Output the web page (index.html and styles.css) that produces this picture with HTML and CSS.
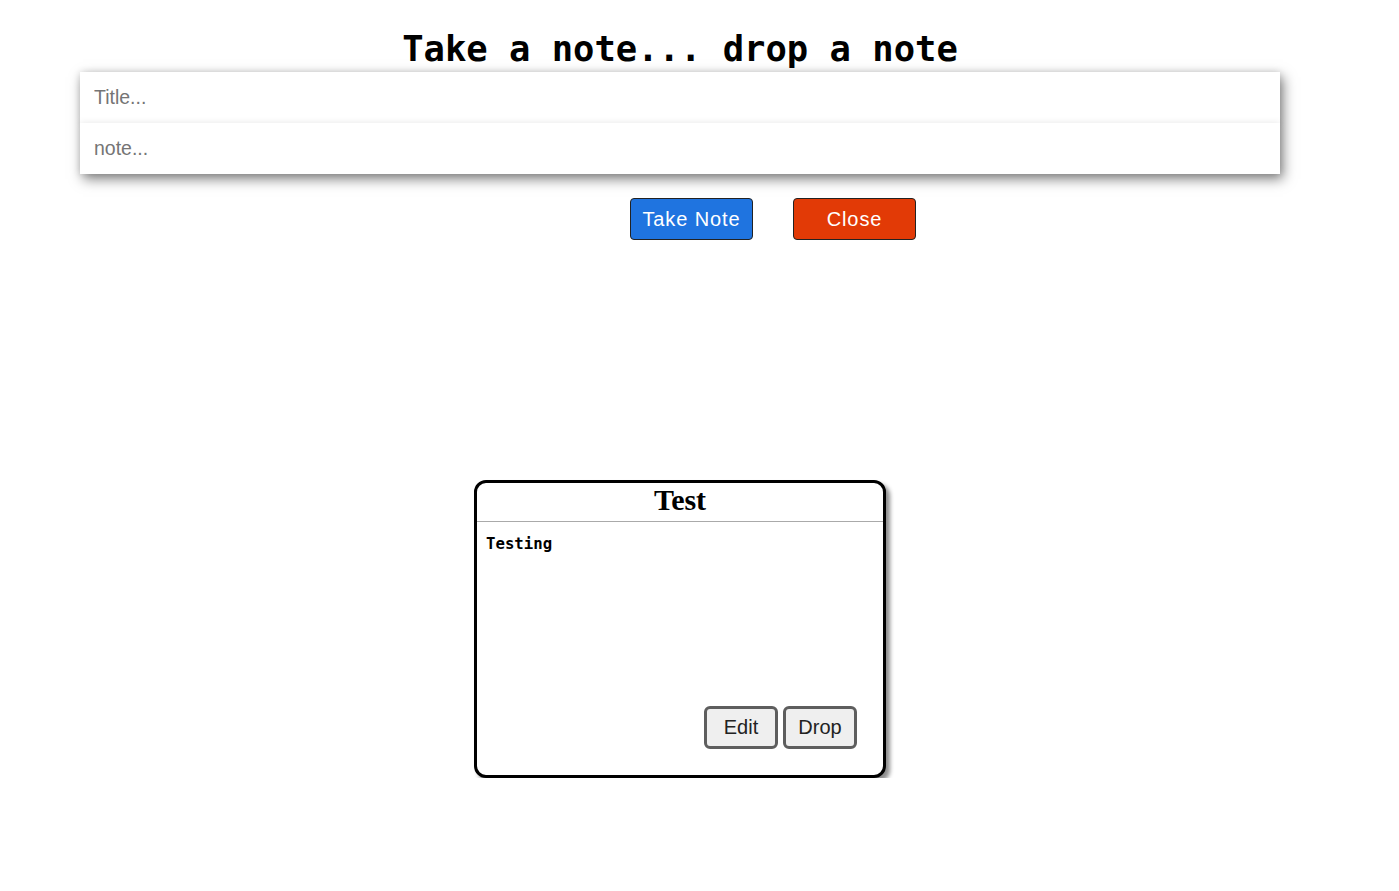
FILE: index.html
```html
<!DOCTYPE html>
<html>
<head>
<meta charset="utf-8">
<link rel="stylesheet" href="styles.css">
</head>
<body>
<div class="app">
  <h1 class="heading">Take a note... drop a note</h1>
  <form class="note-form">
    <input class="field" type="text" placeholder="Title...">
    <input class="field" type="text" placeholder="note...">
  </form>
  <div class="actions">
    <button class="btn btn-take" type="button">Take Note</button>
    <button class="btn btn-close" type="button">Close</button>
  </div>
  <div class="notes">
    <div class="card">
      <div class="card-title">Test</div>
      <div class="card-body">Testing</div>
      <div class="card-actions">
        <button class="card-btn" type="button">Edit</button>
        <button class="card-btn" type="button">Drop</button>
      </div>
    </div>
  </div>
</div>
</body>
</html>
```

FILE: styles.css
```css
html, body {
  margin: 0;
  padding: 0;
  background: #fff;
}
.app {
  width: 1360px;
  padding-top: 26px;
}
.heading {
  margin: 0;
  text-align: center;
  font-family: "DejaVu Sans Mono", "Liberation Mono", monospace;
  font-weight: bold;
  font-size: 35.5px;
  line-height: 46px;
  color: #000;
}
.note-form {
  margin: 0 80px;
  display: flex;
  flex-direction: column;
  box-shadow: 3px 5px 12px rgba(0, 0, 0, 0.5);
}
.field {
  height: 51px;
  box-sizing: border-box;
  border: none;
  outline: none;
  padding: 0 14px;
  font-family: "Liberation Sans", Arial, sans-serif;
  font-size: 19.5px;
  background: #fff;
  box-shadow: 0 0 7px rgba(0, 0, 0, 0.1);
}
.field::placeholder {
  color: #757575;
}
.actions {
  display: flex;
  gap: 40px;
  padding-left: 630px;
  margin-top: 24px;
}
.btn {
  width: 123px;
  height: 42px;
  border: 1px solid #222;
  border-radius: 4px;
  color: #fff;
  font-family: "Liberation Sans", Arial, sans-serif;
  font-size: 20px;
  letter-spacing: 0.9px;
  padding: 0;
}
.btn-take {
  background: #1f74e0;
}
.btn-close {
  background: #e23a06;
}
.notes {
  display: flex;
  justify-content: center;
  margin-top: 240px;
}
.card {
  width: 412px;
  height: 298px;
  box-sizing: border-box;
  border: 3px solid #000;
  border-radius: 12px;
  box-shadow: 4px 4px 4px rgba(0, 0, 0, 0.45);
  display: flex;
  flex-direction: column;
  background: #fff;
}
.card-title {
  height: 39px;
  box-sizing: border-box;
  border-bottom: 1px solid #aaa;
  text-align: center;
  font-family: "Liberation Serif", "DejaVu Serif", serif;
  font-weight: bold;
  font-size: 30px;
  line-height: 34px;
  color: #000;
}
.card-body {
  flex: 1;
  padding: 12px 9px;
  font-family: "DejaVu Sans Mono", "Liberation Mono", monospace;
  font-weight: bold;
  font-size: 15.7px;
  line-height: 20px;
  color: #000;
}
.card-actions {
  display: flex;
  justify-content: flex-end;
  gap: 5px;
  padding: 0 26px 26px 0;
}
.card-btn {
  width: 74px;
  height: 43px;
  padding: 0;
  background: #efefef;
  border: 3px solid #5e5e5e;
  border-radius: 6px;
  font-family: "Liberation Sans", Arial, sans-serif;
  font-size: 20px;
  color: #222;
}
```
